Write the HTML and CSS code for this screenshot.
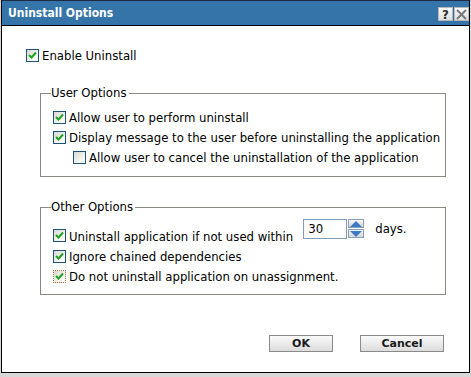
FILE: index.html
```html
<!DOCTYPE html>
<html lang="en">
<head>
  <meta charset="utf-8">
  <title>Uninstall Options</title>
  <link rel="stylesheet" href="styles.css">
</head>
<body>
  <div class="dialog">
    <div class="titlebar">
      <span class="title">Uninstall Options</span>
      <div class="title-buttons">
        <span class="title-btn help">?</span>
        <span class="title-btn close">
          <svg width="11" height="11" viewBox="0 0 11 11"><path d="M1 1L10 10M10 1L1 10" stroke="#7b7b7b" stroke-width="2"/></svg>
        </span>
      </div>
    </div>

    <div class="content">
      <label class="row enable-row">
        <span class="checkbox checked"></span>
        <span class="row-text">Enable Uninstall</span>
      </label>

      <fieldset class="group user-group">
        <legend class="group-title">User Options</legend>
        <label class="row">
          <span class="checkbox checked"></span>
          <span class="row-text">Allow user to perform uninstall</span>
        </label>
        <label class="row">
          <span class="checkbox checked"></span>
          <span class="row-text">Display message to the user before uninstalling the application</span>
        </label>
        <label class="row row-nested">
          <span class="checkbox"></span>
          <span class="row-text">Allow user to cancel the uninstallation of the application</span>
        </label>
      </fieldset>

      <fieldset class="group other-group">
        <legend class="group-title">Other Options</legend>
        <div class="row row-spin">
          <span class="checkbox checked"></span>
          <span class="row-text">Uninstall application if not used within</span>
          <div class="spinner">
            <span class="spin-input">30</span>
            <span class="spin-buttons">
              <span class="spin-btn"><svg width="12" height="6" viewBox="0 0 12 6"><path d="M6 0L12 6H0Z" fill="#3e79c4"/></svg></span>
              <span class="spin-btn"><svg width="12" height="6" viewBox="0 0 12 6"><path d="M0 0H12L6 6Z" fill="#3e79c4"/></svg></span>
            </span>
          </div>
          <span class="row-text days">days.</span>
        </div>
        <label class="row">
          <span class="checkbox checked"></span>
          <span class="row-text">Ignore chained dependencies</span>
        </label>
        <label class="row">
          <span class="checkbox checked focused"></span>
          <span class="row-text">Do not uninstall application on unassignment.</span>
        </label>
      </fieldset>

      <div class="actions">
        <button class="button button-ok" type="button">OK</button>
        <button class="button button-cancel" type="button">Cancel</button>
      </div>
    </div>
  </div>
</body>
</html>
```

FILE: styles.css
```css
*, *::before, *::after {
  margin: 0;
  padding: 0;
  box-sizing: border-box;
}

body {
  width: 471px;
  height: 377px;
  overflow: hidden;
  background-color: #d8d8d8;
  color: #000000;
  font-family: "DejaVu Sans Condensed", "DejaVu Sans", sans-serif;
  font-stretch: condensed;
  font-size: 13px;
}

.dialog {
  margin-left: 1px;
  width: 469px;
  height: 373px;
  border: 1px solid #000000;
  border-top-color: #1d2a44;
  background-color: #FFFFFF;
}

.titlebar {
  display: flex;
  justify-content: space-between;
  height: 25px;
  padding-left: 6px;
  border-bottom: 1px solid #000000;
  background-color: #3574a9;
}

.title {
  color: #FFFFFF;
  font-size: 12px;
  font-weight: bold;
  line-height: 25px;
}

.title-buttons {
  display: flex;
  gap: 1px;
  padding-top: 6px;
}

.title-btn {
  display: flex;
  align-items: center;
  justify-content: center;
  width: 15px;
  height: 14px;
  background: linear-gradient(#fbfbfb, #dedede);
  border: 1px solid #b8b8b8;
}

.help {
  color: #2a2a2a;
  font-family: "DejaVu Sans", sans-serif;
  font-size: 13px;
  font-weight: bold;
  line-height: 1;
}

.content {
  padding: 20px 25px 0 24px;
}

.row {
  display: flex;
  align-items: flex-start;
  height: 20px;
}

.checkbox {
  flex: none;
  width: 13px;
  height: 13px;
  margin: 3px 3px 0 0;
  border: 1px solid #1c5180;
  background: linear-gradient(135deg, #d8d8d0, #fbfbf8 80%);
}

.checkbox.checked {
  background-image:
    url("data:image/svg+xml,%3Csvg xmlns='http://www.w3.org/2000/svg' width='11' height='11'%3E%3Cpath d='M2 5L4.5 7.5L9 2.5' fill='none' stroke='%2321a121' stroke-width='2'/%3E%3C/svg%3E"),
    linear-gradient(135deg, #d8d8d0, #fbfbf8 80%);
}

.checkbox.focused {
  border: 1px dotted #b0703c;
}

.row-text {
  line-height: 20px;
  white-space: nowrap;
}

.group {
  margin-left: 14px;
  width: 406px;
  border: 1px solid #8a8a84;
  padding: 0 0 0 12px;
}

.group-title {
  margin-left: -2px;
  padding: 0 2px 0 0;
  line-height: 14px;
}

.user-group {
  margin-top: 20px;
  padding-top: 8px;
  padding-bottom: 8px;
}

.row-nested {
  padding-left: 20px;
}

.other-group {
  margin-top: 23px;
  padding-top: 5px;
  padding-bottom: 7px;
}

.row-spin {
  height: 28px;
  align-items: flex-end;
}

.row-spin .checkbox {
  margin-bottom: 5px;
}

.spinner {
  display: flex;
  margin-left: 10px;
  align-self: flex-start;
}

.spin-input {
  width: 44px;
  height: 20px;
  padding-left: 4px;
  border: 1px solid #7f9db9;
  line-height: 18px;
}

.spin-buttons {
  display: flex;
  flex-direction: column;
  gap: 1px;
  margin-left: 1px;
}

.spin-btn {
  display: flex;
  align-items: center;
  justify-content: center;
  width: 16px;
  height: 9px;
  border: 1px solid #8aa0b8;
  background: linear-gradient(#f6f6f6, #d6d6d6);
}

.days {
  margin-left: 11px;
  align-self: flex-start;
}

.actions {
  display: flex;
  justify-content: flex-end;
  gap: 27px;
  margin-top: 40px;
}

.button {
  height: 17px;
  border: 1px solid #8a8a8a;
  background: linear-gradient(#fafafa, #dcdcdc);
  color: #1a1a1a;
  font-family: "DejaVu Sans", sans-serif;
  font-size: 11px;
  font-weight: bold;
  line-height: 15px;
}

.button-ok {
  width: 64px;
}

.button-cancel {
  width: 84px;
}
```
